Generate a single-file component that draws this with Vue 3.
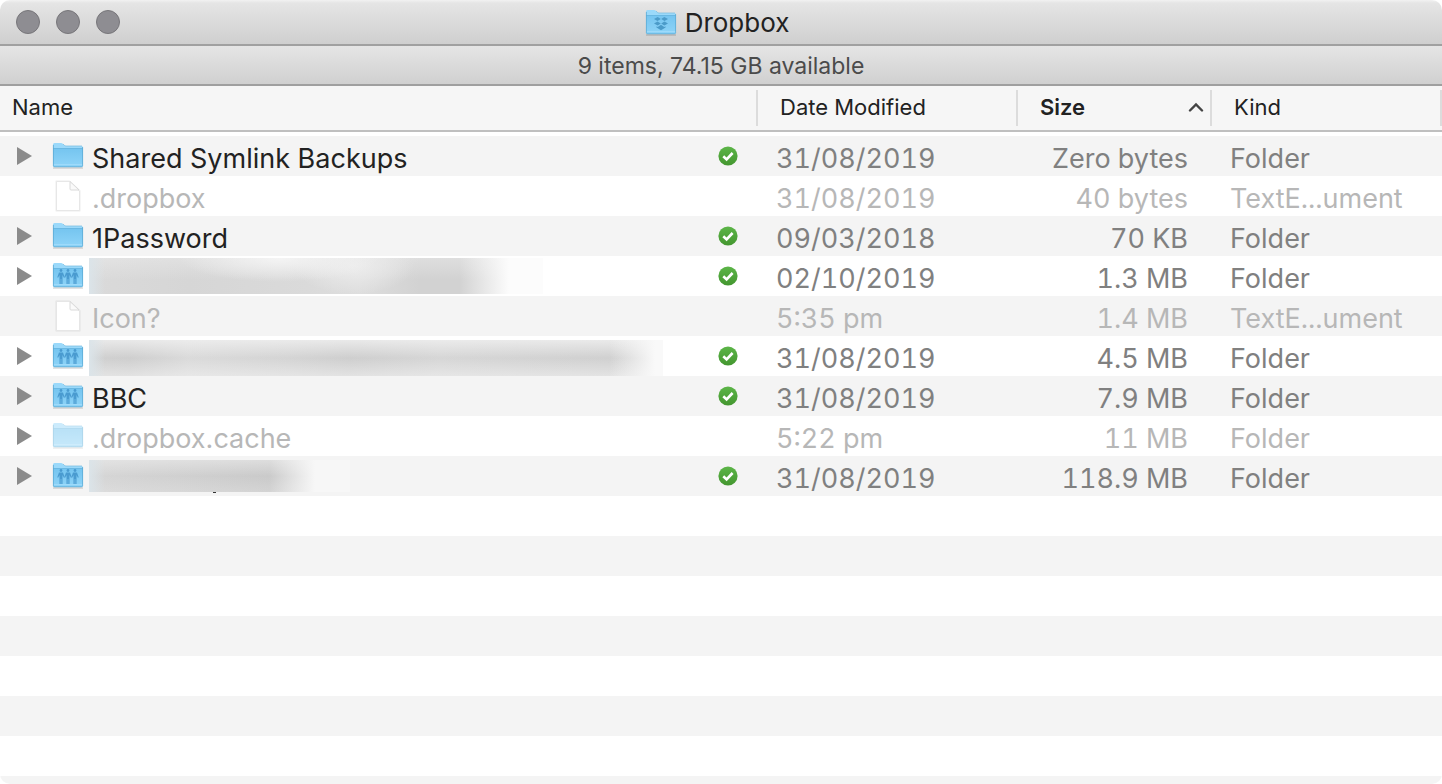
<script setup>
import { ref } from 'vue'

const open = ref([])
const toggle = (i) => {
  open.value = open.value.includes(i) ? open.value.filter((n) => n !== i) : [...open.value, i]
}

const columns = [
  { key: 'name', label: 'Name' },
  { key: 'date', label: 'Date Modified' },
  { key: 'size', label: 'Size', sorted: true },
  { key: 'kind', label: 'Kind' },
]

const items = [
  { icon: 'folder', name: 'Shared Symlink Backups', synced: true, date: '31/08/2019', size: 'Zero bytes', kind: 'Folder' },
  { icon: 'file', name: '.dropbox', dim: true, date: '31/08/2019', size: '40 bytes', kind: 'TextE...ument' },
  { icon: 'folder', name: '1Password', synced: true, date: '09/03/2018', size: '70 KB', kind: 'Folder' },
  { icon: 'shared', redacted: 'medium', synced: true, date: '02/10/2019', size: '1.3 MB', kind: 'Folder' },
  { icon: 'file', name: 'Icon?', dim: true, date: '5:35 pm', size: '1.4 MB', kind: 'TextE...ument' },
  { icon: 'shared', redacted: 'long', synced: true, date: '31/08/2019', size: '4.5 MB', kind: 'Folder' },
  { icon: 'shared', name: 'BBC', synced: true, date: '31/08/2019', size: '7.9 MB', kind: 'Folder' },
  { icon: 'folder', name: '.dropbox.cache', dim: true, date: '5:22 pm', size: '11 MB', kind: 'Folder' },
  { icon: 'shared', redacted: 'short', synced: true, date: '31/08/2019', size: '118.9 MB', kind: 'Folder' },
]
</script>

<template>
  <main class="window">
    <svg class="defs" width="0" height="0" aria-hidden="true">
      <defs>
        <linearGradient id="folderFront" x1="0" y1="0" x2="0" y2="1">
          <stop offset="0" stop-color="#76c5f0" />
          <stop offset="1" stop-color="#8ed4f8" />
        </linearGradient>
        <linearGradient id="checkFill" x1="0" y1="0" x2="0" y2="1">
          <stop offset="0" stop-color="#5cb548" />
          <stop offset="1" stop-color="#43962f" />
        </linearGradient>
        <symbol id="folder" viewBox="0 0 32 28">
          <path d="M1 25.500h30v1h-30z" fill="#000" opacity=".22" />
          <path d="M1 2.500q0-1.500 1.500-1.500H9q1.200 0 2 1l1.300 1.300q.7.700 1.700.700H29.500q1.500 0 1.500 1.500V24H1z" fill="#9bd9fa" />
          <path d="M1 7H31V23.500q0 1.500-1.500 1.500h-27Q1 25 1 23.500z" fill="url(#folderFront)" />
          <path d="M1 6.500H31" stroke="#6ab8e2" stroke-width="1" />
          <path d="M11 2l1.300 1.300q.7.700 1.700.700H30" fill="none" stroke="#7fc0e2" stroke-width=".8" />
          <path d="M1 22.500H31" stroke="#a3dcfa" stroke-width=".8" />
          <path d="M1.400 3V23.500q0 1.300 1.300 1.300h26.600q1.300 0 1.300-1.300V5" fill="none" stroke="#5aa9d3" stroke-width=".8" />
        </symbol>
      </defs>
    </svg>

    <header class="titlebar">
      <div class="lights">
        <button type="button" class="light" aria-label="Close"></button>
        <button type="button" class="light" aria-label="Minimise"></button>
        <button type="button" class="light" aria-label="Zoom"></button>
      </div>
      <h1 class="title">
        <svg class="icon" viewBox="0 0 32 28" aria-hidden="true">
          <use href="#folder" />
          <g fill="#4b9bc9">
            <path d="M9 10l3.700-2 3.100 2-3.300 2zM23 10l-3.700-2-3.100 2 3.300 2zM9 14.400l3.500-2 3.300 2-3.100 2zM23 14.400l-3.500-2-3.300 2 3.100 2zM11.500 17.200l1.200.700 3.300-2.100 3.300 2.100 1.200-.7v1.200L16 21.200l-4.500-2.800z" />
          </g>
        </svg>
        <span>Dropbox</span>
      </h1>
    </header>
    <p class="status">9 items, 74.15 GB available</p>

    <section class="listing">
      <table class="files">
        <colgroup>
          <col v-for="c in columns" :key="c.key" :class="'col-' + c.key" />
        </colgroup>
        <thead>
          <tr>
            <th v-for="c in columns" :key="c.key" scope="col" :aria-sort="c.sorted ? 'ascending' : null">
              <button type="button" class="sort" :class="{ sorted: c.sorted }">
                <span>{{ c.label }}</span>
                <svg v-if="c.sorted" class="caret" viewBox="0 0 16 10" aria-hidden="true">
                  <path d="M2 8.500L8 2.500l6 6" fill="none" stroke="#444" stroke-width="2.400" stroke-linecap="round" />
                </svg>
              </button>
            </th>
          </tr>
        </thead>
        <tbody>
          <tr v-for="(item, i) in items" :key="i" :class="{ dim: item.dim }">
            <td>
              <div class="entry">
                <button
                  v-if="item.icon !== 'file'"
                  type="button"
                  class="disclosure"
                  aria-label="Show contents"
                  :aria-expanded="open.includes(i)"
                  @click="toggle(i)"
                >
                  <svg viewBox="0 0 16 20" aria-hidden="true"><path d="M1 1l15 9-15 9z" fill="#8b8b8b" /></svg>
                </button>
                <span v-else class="disclosure"></span>

                <svg v-if="item.icon === 'file'" class="icon file" viewBox="0 0 32 32" aria-hidden="true">
                  <path d="M4.500 1.500H17l10.500 9.500v19.500h-23z" fill="#fff" stroke="#000" stroke-opacity=".05" stroke-width="2.500" stroke-linejoin="round" />
                  <path d="M4.500 1.500H17.500L27.500 11v19.500h-23z" fill="#fff" stroke="#e2e2e2" stroke-width=".8" stroke-linejoin="round" />
                  <path d="M18 1.500v7.500q0 1 1 1h8z" fill="#fafafa" stroke="#d6d6d6" stroke-width=".9" stroke-linejoin="round" />
                </svg>
                <svg v-else class="icon" viewBox="0 0 32 28" aria-hidden="true">
                  <use href="#folder" />
                  <g v-if="item.icon === 'shared'" fill="#4a9bd0">
                    <g v-for="x in [9, 16, 23]" :key="x" :transform="`translate(${x} 0)`">
                      <circle cx="0" cy="8.500" r="1.400" />
                      <path d="M-2 10.500h4l1.700 4.800-.8.500L1.500 13V22H.3V17h-.6v5h-1.200V13l-1.400 2.800-.8-.5z" />
                    </g>
                  </g>
                </svg>

                <span v-if="item.name" class="name">{{ item.name }}</span>
                <span v-else class="redacted-slot">
                  <span class="redacted" :class="item.redacted" role="img" aria-label="Hidden name"></span>
                </span>

                <svg v-if="item.synced" class="check" viewBox="0 0 20 20" role="img" aria-label="Synced">
                  <circle cx="10" cy="10" r="9.600" fill="url(#checkFill)" />
                  <path d="M5.300 10.300l3.300 3.200 6-6.500" fill="none" stroke="#fff" stroke-width="2.600" />
                </svg>
              </div>
            </td>
            <td class="date">{{ item.date }}</td>
            <td class="size">{{ item.size }}</td>
            <td class="kind">{{ item.kind }}</td>
          </tr>
        </tbody>
      </table>
      <div class="empty"></div>
    </section>
  </main>
</template>

<style>
body {
  background: #fff;
}
</style>

<style scoped>
.window {
  display: flex;
  flex-direction: column;
  min-height: 100vh;
  border-radius: 10px;
  overflow: hidden;
  background: #fff;
  color: #222;
  font-family: Inter, "Liberation Sans", sans-serif;
}
.defs {
  position: absolute;
}
button {
  margin: 0;
  padding: 0;
  border: 0;
  background: none;
  color: inherit;
  font: inherit;
}
.titlebar {
  display: grid;
  grid-template-columns: 1fr auto 1fr;
  align-items: center;
  box-sizing: border-box;
  height: 46px;
  padding: 0 16px;
  border-bottom: 2px solid #a0a0a0;
  background: linear-gradient(#f2f2f2, #e5e5e5 3px, #cfcfcf);
}
.lights {
  display: flex;
  gap: 16px;
}
.light {
  width: 24px;
  height: 24px;
  border: 1px solid #77767a;
  border-radius: 50%;
  background: #8e8d92;
}
.title {
  display: flex;
  align-items: center;
  gap: 8px;
  margin: 0;
  padding: 1px 8px 0 0;
  font-size: 26px;
  font-weight: 400;
  line-height: 43px;
}
.status {
  box-sizing: border-box;
  height: 40px;
  margin: 0;
  border-bottom: 2px solid #9f9f9f;
  background: linear-gradient(#e5e5e5, #d0d0d0);
  color: #4b4b4b;
  font-size: 23px;
  line-height: 40px;
  text-align: center;
}
.listing {
  display: flex;
  flex: 1;
  flex-direction: column;
}
.files {
  width: 100%;
  table-layout: fixed;
  border-collapse: separate;
  border-spacing: 0;
}
.col-date {
  width: 260px;
}
.col-size {
  width: 194px;
}
.col-kind {
  width: 230px;
}
th {
  height: 36px;
  padding: 4px 0;
  border-bottom: 2px solid #bfbfbf;
  background: #f6f6f6;
  font-weight: 400;
}
.sort {
  display: flex;
  align-items: center;
  justify-content: space-between;
  box-sizing: border-box;
  width: 100%;
  height: 36px;
  padding: 0 6px 2px 22px;
  border-right: 2px solid #dcdcdc;
  font-size: 22px;
  line-height: 34px;
}
th:first-child .sort {
  padding-left: 12px;
}
.sorted {
  font-weight: 600;
}
.caret {
  width: 16px;
  height: 10px;
}
tbody::before {
  content: "";
  display: block;
  height: 4px;
}
td {
  height: 34px;
  padding: 6px 0 0;
  color: #808080;
  font-size: 27px;
  font-variant-numeric: tabular-nums;
  line-height: 34px;
  white-space: nowrap;
}
td:first-child {
  height: 40px;
  padding: 0;
  font-variant-numeric: normal;
}
tbody tr:nth-child(odd) {
  background: #f4f4f4;
}
.entry {
  display: flex;
  align-items: center;
  height: 40px;
  padding: 0 20px 0 16px;
}
.disclosure {
  display: flex;
  width: 16px;
  height: 20px;
}
.disclosure svg {
  width: 16px;
  height: 20px;
}
.icon {
  width: 32px;
  height: 28px;
}
.entry .icon {
  margin: 0 8px 0 20px;
}
.entry .file {
  height: 32px;
}
.name {
  flex: 1;
  padding-top: 6px;
  overflow: hidden;
  color: #222;
  text-overflow: ellipsis;
}
.redacted-slot {
  display: flex;
  flex: 1;
  align-items: center;
  min-width: 0;
  height: 40px;
}
.redacted {
  height: 36px;
  margin-left: -3px;
}
.medium {
  width: 454px;
  background:
    linear-gradient(90deg, #dbe4e9, #dbe4e900 16px),
    linear-gradient(90deg, #fcfcfc00 370px, #fcfcfc 420px),
    radial-gradient(100px 24px at 190px 0, #f4f4f4, #f4f4f400),
    radial-gradient(60px 28px at 265px 8px, #ececec, #ececec00),
    linear-gradient(#f0f0f066, #f0f0f000 60%),
    linear-gradient(90deg, #dadada, #d6d6d6 100px, #dadada 220px, #dedede 270px, #d2d2d2 330px, #d2d2d2);
}
.long {
  align-self: flex-end;
  width: 574px;
  background:
    linear-gradient(90deg, #dbe4e9, #dbe4e900 16px),
    linear-gradient(90deg, #f9f9f900 520px, #f9f9f9 566px),
    linear-gradient(#f0f0f0cc, #f0f0f000 50%, #f0f0f099),
    linear-gradient(90deg, #d0d0d0, #cecece 40px, #dadada 100px, #d4d4d4 200px, #cecece 260px, #d6d6d6 350px, #cecece);
}
.short {
  position: relative;
  width: 261px;
  height: 32px;
  background:
    linear-gradient(90deg, #dbe4e9, #dbe4e900 16px),
    linear-gradient(90deg, #f7f7f700 180px, #f7f7f7 226px),
    linear-gradient(#eeeeee88, #eeeeee00 50%, #eeeeee44),
    linear-gradient(90deg, #d6d6d6, #cacaca 180px);
}
.short::after {
  content: "";
  position: absolute;
  top: 32px;
  left: 124px;
  width: 3px;
  height: 1px;
  background: #333;
}
.check {
  width: 20px;
  height: 20px;
}
.date,
.kind {
  padding-left: 18px;
}
.size {
  padding-right: 24px;
  text-align: right;
}
.dim td,
.dim .name {
  color: #b7b7b7;
}
.dim .icon:not(.file) {
  opacity: 0.5;
}
.empty {
  flex: 1;
  background: repeating-linear-gradient(#fff 0 40px, #f4f4f4 40px 80px);
}
</style>
